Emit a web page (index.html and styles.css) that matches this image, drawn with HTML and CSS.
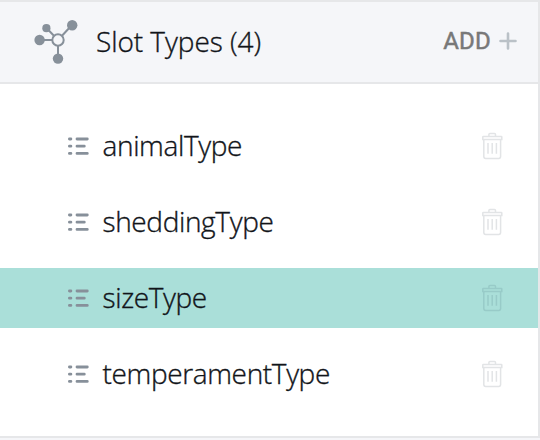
FILE: index.html
```
<!DOCTYPE html>
<html lang="en">
<head>
<meta charset="utf-8">
<title>Slot Types</title>
<link rel="stylesheet" href="styles.css">
</head>
<body>
<svg width="0" height="0" class="defs" aria-hidden="true">
  <symbol id="list" viewBox="0 0 22 20">
    <path d="M2.4 3h1.5M2.4 10.2h1.5M2.4 17.4h1.5M10 3h10.3M10 10.2h7.3M10 17.4h10.3" fill="none" stroke="#87909a" stroke-width="2.8" stroke-linecap="round"/>
  </symbol>
  <symbol id="trash" viewBox="0 0 22 28">
    <path d="M7.9 4V2.6Q7.9 1.6 8.9 1.6h4.6q1 0 1 1V4M2.3 4.6h18q.5 0 .5.5v2.4h-19V5.1q0-.5.5-.5zM2.8 7.6v17q0 1.8 1.8 1.8h13.2q1.8 0 1.8-1.8v-17M7 11v10.8M11.2 11v10.8M15.4 11v10.8" fill="none" stroke="currentColor" stroke-width="1.5"/>
  </symbol>
</svg>
<main class="panel">
  <header class="header">
    <svg class="network" viewBox="0 0 46 46">
      <path d="M24 22H6M24 22L12.5 10M24 22L38 7M24 22v18" stroke="#87909a" stroke-width="2" fill="none"/>
      <g fill="#87909a"><circle cx="5.6" cy="22" r="5.2"/><circle cx="12.4" cy="10.2" r="4.1"/><circle cx="38.2" cy="7.3" r="5.2"/><circle cx="24" cy="40.6" r="5.2"/></g>
      <circle cx="24" cy="22" r="5.7" fill="#f5f6f9" stroke="#87909a" stroke-width="2"/>
    </svg>
    <h1 class="title">Slot Types (4)</h1>
    <button class="add"><span>ADD</span><svg class="plus" viewBox="0 0 18 18"><path d="M1.5 9h15M9 1.5v15" stroke="#bac1c7" stroke-width="2.6" stroke-linecap="round"/></svg></button>
  </header>
  <ul class="list">
    <li class="row"><svg class="bullets"><use href="#list"/></svg><span class="name">animalType</span><svg class="trash"><use href="#trash"/></svg></li>
    <li class="row"><svg class="bullets"><use href="#list"/></svg><span class="name">sheddingType</span><svg class="trash"><use href="#trash"/></svg></li>
    <li class="row selected"><svg class="bullets"><use href="#list"/></svg><span class="name">sizeType</span><svg class="trash"><use href="#trash"/></svg></li>
    <li class="row"><svg class="bullets"><use href="#list"/></svg><span class="name">temperamentType</span><svg class="trash"><use href="#trash"/></svg></li>
  </ul>
</main>
</body>
</html>
```
FILE: styles.css
```
* { box-sizing: border-box; }
body {
  margin: 0;
  height: 440px;
  overflow: hidden;
  background: #f5f6f9;
  color: #111419;
  font-family: "Open Sans", "Noto Sans", sans-serif;
}
.defs { display: none; }
.panel {
  width: 540px;
  height: 438px;
  background: #fff;
  border: solid #e6e7e9;
  border-width: 2px 2px 2px 0;
}
.header {
  display: flex;
  align-items: center;
  height: 82px;
  padding: 0 21px 0 34px;
  background: #f5f6f9;
  border-bottom: 2px solid #e6e7e9;
}
.network { width: 46px; height: 46px; margin-top: -2px; }
.title {
  flex: 1;
  margin: -2px 0 0 16px;
  font-size: 28px;
  font-weight: 300;
  letter-spacing: -0.06px;
  line-height: 40px;
  white-space: nowrap;
  -webkit-text-stroke: 0.35px currentColor;
}
.add {
  display: flex;
  align-items: center;
  gap: 8px;
  margin-top: -2px;
  padding: 0;
  border: 0;
  background: none;
  color: #787878;
  font: 400 24px/30px Roboto, sans-serif;
  letter-spacing: 0.2px;
  -webkit-text-stroke: 0.5px currentColor;
}
.plus { width: 18px; height: 18px; }
.list {
  display: flex;
  flex-direction: column;
  gap: 16px;
  margin: 0;
  padding: 32px 0 0;
  list-style: none;
}
.row {
  display: flex;
  align-items: center;
  height: 60px;
  padding: 0 35px 0 67px;
}
.selected { background: #aadfd9; }
.bullets { width: 22px; height: 20px; }
.name {
  flex: 1;
  margin: -2px 0 0 13.5px;
  font-size: 28px;
  font-weight: 300;
  letter-spacing: -0.36px;
  line-height: 40px;
  -webkit-text-stroke: 0.35px currentColor;
}
.trash { width: 22px; height: 28px; color: #e2e4e6; }
.selected .trash { color: #98cbc8; }
```
